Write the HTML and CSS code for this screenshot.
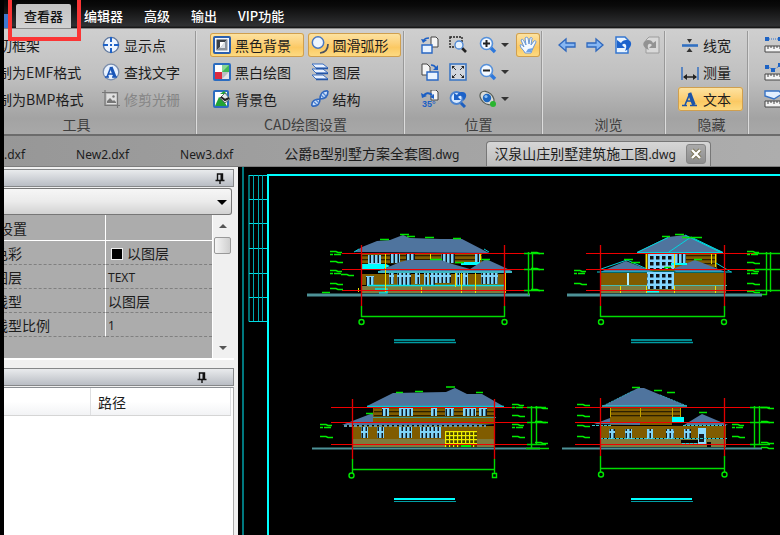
FILE: index.html
```html
<!DOCTYPE html>
<html lang="zh-CN">
<head>
<meta charset="utf-8">
<title>CAD 查看器</title>
<link rel="stylesheet" href="styles.css">
</head>
<body>
<div class="app">
  <header class="menubar">
    <span class="app-button"></span>
    <nav class="menu">
      <a href="#" class="menu-item active">查看器</a>
      <a href="#" class="menu-item">编辑器</a>
      <a href="#" class="menu-item">高级</a>
      <a href="#" class="menu-item">输出</a>
      <a href="#" class="menu-item">VIP功能</a>
    </nav>
    <span class="highlight"></span>
  </header>

  <div class="ribbon">
    <section class="group group-tools">
      <div class="columns">
        <div class="column cut">
          <button class="tool">切框架</button>
          <button class="tool">制为EMF格式</button>
          <button class="tool">制为BMP格式</button>
        </div>
        <div class="column">
          <button class="tool"><svg class="icon" viewBox="0 0 18 18"><circle cx="9" cy="9" r="7.6" fill="#eef5ff" stroke="#5f789f" stroke-width="1.4"/><path d="M9 1v5M9 12v5M1 9h5M12 9h5" stroke="#1d62c8" stroke-width="2"/><path d="M8 9h2" stroke="#1d62c8" stroke-width="2"/></svg>显示点</button>
          <button class="tool"><svg class="icon" viewBox="0 0 18 18"><circle cx="9" cy="9" r="7.8" fill="#e8f2ff" stroke="#7b8dab" stroke-width="1.3"/><path d="M5 14L9 4" fill="none" stroke="#1a56b8" stroke-width="1.600"/><path d="M9 4l4 10" stroke="#1a56b8" stroke-width="3.200"/><path d="M6 11h6M3 14h4M10 14h5" stroke="#1a56b8" stroke-width="1.400"/></svg>查找文字</button>
          <button class="tool" disabled><svg class="icon" viewBox="0 0 18 18"><path d="M3 0v15.500H18M0 2.500h15.500V18" fill="none" stroke="#777" stroke-width="1.200"/><path d="M4.500 4h10v10h-10z" fill="#e0e0e0"/><path d="M5 13v-2l3-3 3 3 1-1 2 2v1z" fill="#777"/><circle cx="11.500" cy="6.500" r="1.200" fill="#777"/></svg>修剪光栅</button>
        </div>
      </div>
      <h2 class="group-title">工具</h2>
    </section>

    <section class="group group-settings">
      <div class="columns">
        <div class="column wide">
          <button class="tool on"><svg class="icon" viewBox="0 0 18 18"><rect x="1" y="1" width="16" height="16" rx="1" fill="#f4f8ff" stroke="#2b5fae" stroke-width="2"/><path d="M3.500 3.500h11l-11 11z" fill="#3a4048"/><path d="M14.500 3.500v11h-11z" fill="#8b929b"/><path d="M7 6h5l-5 6z" fill="#fff"/><path d="M12 6v6H7z" fill="#dde1e6"/></svg>黑色背景</button>
          <button class="tool"><svg class="icon" viewBox="0 0 18 18"><rect x="1" y="1" width="16" height="16" rx="1" fill="#fff" stroke="#2b6cc0" stroke-width="2"/><path d="M9 2h7v7H9z" fill="#3fb955"/><path d="M9 2h7l-7 7z" fill="#8ad696"/><path d="M2 9h7v7H2z" fill="#dc2b40"/><path d="M9 9h7v7H9z" fill="#b9bec4"/><path d="M16 9v7H9z" fill="#e4e6e9"/></svg>黑白绘图</button>
          <button class="tool"><svg class="icon" viewBox="0 0 18 18"><rect x="1" y="1" width="14" height="16" rx="1" fill="#fff" stroke="#2b6cc0" stroke-width="2"/><path d="M2 16L6 7l4 3 4 6z" fill="#22a434"/><path d="M7 4l4-3 3 3z" fill="#22a434"/><path d="M7 8l5-5 5 6-5 4z" fill="#e4e9ec" stroke="#5a6a6a"/><path d="M8 7l4 3 4-2" fill="none" stroke="#222" stroke-width="2"/></svg>背景色</button>
        </div>
        <div class="column wide">
          <button class="tool on"><svg class="icon" viewBox="0 0 18 18"><circle cx="7" cy="6.500" r="5.700" fill="#edf5ff" stroke="#4a78c0" stroke-width="1.500"/><path d="M17 8c0 5-3 8.500-8 9" fill="none" stroke="#4a5260" stroke-width="1.700"/></svg>圆滑弧形</button>
          <button class="tool"><svg class="icon" viewBox="0 0 18 18"><path d="M1 1h11l5 4H5z" fill="#eaf2ff" stroke="#3b6fc2"/><path d="M1 6h11l5 4H5z" fill="#eaf2ff" stroke="#3b6fc2"/><path d="M1 12h11l5 4H5z" fill="#eaf2ff" stroke="#3b6fc2"/><path d="M5 5.500h12M5 10.500h12M5 16.500h12" stroke="#2456a6" stroke-width="1.500"/></svg>图层</button>
          <button class="tool"><svg class="icon" viewBox="0 0 18 18"><path d="M1 16c-1-5 3-7 8-7s8-3 8-8M1 16c6 1 8-3 8-7s2-9 8-8" fill="#cfe1fa" stroke="#2f66bd" stroke-width="1.600"/><path d="M3 12l3 3M5 10l3 3M10 5l3 3M12 3l3 3" stroke="#4d84d2" stroke-width="1.300"/></svg>结构</button>
        </div>
      </div>
      <h2 class="group-title">CAD绘图设置</h2>
    </section>

    <section class="group group-position">
      <div class="columns">
        <div class="column">
          <button class="tool" aria-label="向左旋转"><svg class="icon" viewBox="0 0 18 18"><path d="M10 1h5l2 2v8h-7z" fill="#f5f5f5" stroke="#444"/><path d="M1 9h10v8H1z" fill="#e9f3ff" stroke="#2867c4" stroke-width="1.400"/><path d="M8 2C5 2 3 3 3 5" fill="none" stroke="#1c5fc4" stroke-width="1.600"/><path d="M0 3l2 4 4-3z" fill="#1c5fc4"/></svg></button>
          <button class="tool" aria-label="向右旋转"><svg class="icon" viewBox="0 0 18 18"><path d="M1 1h5l3 3v8H1z" fill="#f5f5f5" stroke="#444"/><path d="M6 9h11v8H6z" fill="#e9f3ff" stroke="#2867c4" stroke-width="1.400"/><path d="M10 2c3 0 4 1 5 3" fill="none" stroke="#1c5fc4" stroke-width="1.600"/><path d="M17 2v5h-5z" fill="#1c5fc4"/></svg></button>
          <button class="tool" aria-label="旋转35°"><svg class="icon" viewBox="0 0 18 18"><path d="M10 0h5l2 2v8h-7z" fill="#f5f5f5" stroke="#444"/><path d="M3 6c1-3 5-4 8-1" fill="none" stroke="#1c5fc4" stroke-width="2"/><path d="M0 3l1 5 5-2zM9 7l4-3v5z" fill="#1c5fc4"/><text x="1" y="17" class="icon-text">35°</text></svg></button>
        </div>
        <div class="column">
          <button class="tool" aria-label="框选缩放"><svg class="icon" viewBox="0 0 18 18"><path d="M1 1h12v10H1z" fill="none" stroke="#222" stroke-width="1.400" stroke-dasharray="2 1"/><path d="M13 12l4 4" stroke="#222" stroke-width="2.600"/><circle cx="10" cy="9" r="4" fill="#e5f2ff" stroke="#4b86d4" stroke-width="1.300"/></svg></button>
          <button class="tool" aria-label="适合窗口"><svg class="icon" viewBox="0 0 18 18"><rect x="1" y="1" width="16" height="16" fill="#d2d7de" stroke="#3f78c4" stroke-width="1.600"/><path d="M3 6V3h3zM12 3h3v3zM3 12v3h3zM15 12v3h-3z" fill="#222"/><path d="M4 4l3 3M14 4l-3 3M4 14l3-3M14 14l-3-3" stroke="#333"/></svg></button>
          <button class="tool" aria-label="还原缩放"><svg class="icon" viewBox="0 0 18 18"><path d="M11 12l5 5" stroke="#1d5fc0" stroke-width="3"/><circle cx="7.500" cy="8" r="6" fill="#d9eaff" stroke="#4a82cf" stroke-width="1.800"/><path d="M5 3v7h7L9 7c3-3 6 0 5 4 5-4 4-10-2-9-2 0-3 1-4 3z" fill="#1d62c8"/></svg></button>
        </div>
        <div class="column zoom-column">
          <button class="tool" aria-label="放大"><svg class="icon" viewBox="0 0 18 18"><path d="M11 11l5 5" stroke="#2d78dc" stroke-width="3.400"/><circle cx="7.500" cy="7.500" r="6" fill="#f4f9ff" stroke="#5590da" stroke-width="1.600"/><path d="M4 7.500h7M7.500 4v7" stroke="#222" stroke-width="2"/></svg><span class="caret"></span></button>
          <button class="tool" aria-label="缩小"><svg class="icon" viewBox="0 0 18 18"><path d="M11 11l5 5" stroke="#2d78dc" stroke-width="3.400"/><circle cx="7.500" cy="7.500" r="6" fill="#f4f9ff" stroke="#5590da" stroke-width="1.600"/><path d="M4 7.500h7" stroke="#222" stroke-width="2"/></svg><span class="caret"></span></button>
          <button class="tool" aria-label="视图"><svg class="icon" viewBox="0 0 18 18"><ellipse cx="8" cy="8" rx="8" ry="5.500" transform="rotate(42 8 8)" fill="#d9dbd8" stroke="#555c55" stroke-width="1.200"/><circle cx="8" cy="8" r="4.200" fill="#1d67c0"/><circle cx="7" cy="6.500" r="1.600" fill="#8dc1f5"/><circle cx="14" cy="14" r="3" fill="#29b52f"/></svg><span class="caret"></span></button>
        </div>
        <div class="column">
          <button class="tool on" aria-label="平移"><svg class="icon" viewBox="0 0 18 18"><path d="M6 17C5 14 1 12 1 9c1-1 2 0 4 2L2 4c1-1 2-1 3 1l2 4-1-7c1-1 2-1 3 0l1 6 1-6c1-1 3 0 2 1l-1 6 3-4c1-1 2 0 2 1l-3 6c-1 2-1 3-2 5z" fill="#f4f9ff" stroke="#6a98d8"/><path d="M7 16h5c1-2 1-3 2-4l-5 1z" fill="#6da2e6"/></svg></button>
        </div>
      </div>
      <h2 class="group-title">位置</h2>
    </section>

    <section class="group group-browse">
      <div class="columns">
        <button class="tool" aria-label="后退"><svg class="icon" viewBox="0 0 18 18"><path d="M1 9l7-6v4h9v4H8v4z" fill="#86b6f2" stroke="#2f68bd" stroke-width="1.300"/></svg></button>
        <button class="tool" aria-label="前进"><svg class="icon" viewBox="0 0 18 18"><path d="M17 9l-7-6v4H1v4h9v4z" fill="#86b6f2" stroke="#2f68bd" stroke-width="1.300"/></svg></button>
        <button class="tool" aria-label="撤销"><svg class="icon" viewBox="0 0 18 18"><path d="M2 1h9l3 3v13H2z" fill="#e9f4ff" stroke="#3476cf" stroke-width="1.500"/><path d="M3 4v8h8l-3-3c3-3 6 0 3 6 8-3 8-12 1-11-2 0-4 1-5 3z" fill="#1c63cd"/></svg></button>
        <button class="tool" aria-label="重做" disabled><svg class="icon" viewBox="0 0 18 18"><path d="M4 4l3-3h10v16H4z" fill="#d8d8d8" stroke="#9c9c9c"/><path d="M14 5v7H7l3-3C7 6 4 9 7 14-1 11 0 5 6 4c3 0 4 1 5 3z" fill="#929292"/></svg></button>
      </div>
      <h2 class="group-title">浏览</h2>
    </section>

    <section class="group group-hide">
      <div class="columns">
        <div class="column">
          <button class="tool"><svg class="icon" viewBox="0 0 18 18"><path d="M1 9.500h16" stroke="#3170c2" stroke-width="2.600"/><path d="M6 3h5L8.500 7zM8.500 12l3 4h-6z" fill="#333"/></svg>线宽</button>
          <button class="tool"><svg class="icon" viewBox="0 0 18 18"><path d="M1 4v13M17 4v13" stroke="#2d6bc0" stroke-width="1.400"/><path d="M3 14h12" stroke="#222" stroke-width="1.500"/><path d="M2 14l4-3v6zM16 14l-4-3v6z" fill="#222"/></svg>测量</button>
          <button class="tool on"><svg class="icon" viewBox="0 0 18 18"><path d="M4 15L9 3M6 11h6" fill="none" stroke="#1d54a8" stroke-width="1.600"/><path d="M8.500 3L13 15" stroke="#1d54a8" stroke-width="3.600"/><path d="M1 15.500h5M9 15.500h7" stroke="#1d54a8" stroke-width="1.600"/></svg>文本</button>
        </div>
      </div>
      <h2 class="group-title">隐藏</h2>
    </section>

    <section class="group group-measure">
      <div class="columns">
        <div class="column">
          <button class="tool" aria-label="测量距离"><svg class="icon" viewBox="0 0 18 18"><path d="M3 3h15" stroke="#2c71cc" stroke-dasharray="1 1"/><path d="M1 1h4v4H1zM14 1h4v4h-4z" fill="#1d63c4"/><path d="M1 10h18v6H1z" fill="#f3f3f3" stroke="#444"/><path d="M4 10v3M7 10v2M10 10v3M13 10v2M16 10v3" stroke="#444"/></svg></button>
          <button class="tool" aria-label="测量折线"><svg class="icon" viewBox="0 0 18 18"><path d="M3 3l6 4 8-5" fill="none" stroke="#2c71cc" stroke-dasharray="1 1"/><path d="M1 2h4v4H1zM7 5h4v4H7zM14 0h4v4h-4z" fill="#1d63c4"/><path d="M1 11h18v6H1z" fill="#f3f3f3" stroke="#444"/><path d="M4 11v3M7 11v2M10 11v3M13 11v2M16 11v3" stroke="#444"/></svg></button>
          <button class="tool" aria-label="测量面积"><svg class="icon" viewBox="0 0 18 18"><path d="M1 1h14l3 3-8 5-9-3z" fill="#e2efff" stroke="#3672c4" stroke-width="1.400"/><path d="M1 11h18v6H1z" fill="#f3f3f3" stroke="#444"/><path d="M4 11v3M7 11v2M10 11v3M13 11v2M16 11v3" stroke="#444"/></svg></button>
        </div>
      </div>
    </section>
  </div>

  <nav class="doc-tabs">
    <a href="#" class="doc-tab"><span class="latin">.dxf</span></a>
    <a href="#" class="doc-tab"><span class="latin">New2.dxf</span></a>
    <a href="#" class="doc-tab"><span class="latin">New3.dxf</span></a>
    <a href="#" class="doc-tab">公爵<span class="latin">B</span>型别墅方案全套图<span class="latin">.dwg</span></a>
    <div class="doc-tab current"><a href="#">汉泉山庄别墅建筑施工图<span class="latin">.dwg</span></a><button class="close" aria-label="关闭"><svg viewBox="0 0 12 12"><path d="M2 2l8 8M10 2l-8 8" stroke="#77704f" stroke-width="4"/><path d="M2 2l8 8M10 2l-8 8" stroke="#fff" stroke-width="2.400"/></svg></button></div>
  </nav>

  <main class="workspace">
    <aside class="side">
      <div class="panel-head"><svg class="pin" viewBox="0 0 10 11"><path d="M2.500 7V1h5v6M0.500 7.500h9M5 7v4" fill="none" stroke="#111" stroke-width="1.400"/><path d="M6.500 1v6" stroke="#111" stroke-width="2"/></svg></div>
      <div class="picker"><select aria-label="对象"><option></option></select><span class="caret"></span></div>
      <div class="props">
        <table class="prop-table">
          <tr><th><span>设置</span></th><td></td></tr>
          <tr><th><span class="deep">色彩</span></th><td><span class="swatch"></span>以图层</td></tr>
          <tr><th><span class="deep">图层</span></th><td><span class="latin">TEXT</span></td></tr>
          <tr><th><span class="deep">线型</span></th><td>以图层</td></tr>
          <tr><th><span class="deep">线型比例</span></th><td><span class="latin">1</span></td></tr>
        </table>
        <div class="scrollbar"><span class="arrow up"></span><span class="thumb"></span><span class="arrow down"></span></div>
      </div>
      <div class="panel-head second"><svg class="pin" viewBox="0 0 10 11"><path d="M2.500 7V1h5v6M0.500 7.500h9M5 7v4" fill="none" stroke="#111" stroke-width="1.400"/><path d="M6.500 1v6" stroke="#111" stroke-width="2"/></svg></div>
      <div class="list">
        <div class="list-head"><span class="first"></span><span class="path">路径</span></div>
      </div>
    </aside>

    <div class="canvas">
      <svg class="drawing" viewBox="238 167 542 368" preserveAspectRatio="xMinYMin slice">
        <defs>
          <pattern id="siding" x="0" y="253" width="8" height="4" patternUnits="userSpaceOnUse"><path d="M0 0h8v4H0z" fill="#805c00"/><path d="M0 2h8v1.300H0z" fill="#2c2000"/></pattern>
          <pattern id="glass" x="0" y="0" width="4" height="12" patternUnits="userSpaceOnUse"><path d="M0 0h4v12H0z" fill="#7fd4f8"/><path d="M1.500 1h1.500v10H1.500z" fill="#101820"/></pattern>
          <pattern id="panes" x="648" y="254" width="6" height="6" patternUnits="userSpaceOnUse"><path d="M0 0h6v6H0z" fill="#83d6ff"/><path d="M2 2h3.500v3.500H2z" fill="#0b1115"/></pattern>
          <pattern id="lattice" x="445" y="431" width="4" height="4" patternUnits="userSpaceOnUse"><path d="M0 0h4v4H0z" fill="#4a4500"/><path d="M0 .5h4M.5 0v4" stroke="#f0f000" stroke-width="1.400"/></pattern>
          <g id="mark" fill="none" stroke="#00f000" stroke-width="1.500"><path d="M0 -.5h6l2 1h4M4 2.500h7M0 2.500h3"/></g>
          <g id="thin-mark" fill="none" stroke="#00f000" stroke-width="1.400"><path d="M0 -.5h6l2 1h5"/></g>
          <g id="title" fill="none"><path d="M0 0h61" stroke="#00b9c0" stroke-width="1.600"/><path d="M0 2.500h62" stroke="#009ba2" stroke-width="1.400"/></g>
          <g id="title-bold" fill="none"><path d="M0 0h61" stroke="#0ff" stroke-width="2"/><path d="M0 2.500h62" stroke="#009fa6" stroke-width="1.200"/></g>
        </defs>

        <g fill="none">
          <path d="M243 167V535" stroke="#00a0a8" stroke-width="1.500"/>
          <path d="M249 175V321.500H267M249 175.500h18M249 199.500h18M249 223.500h18M249 248.500h18M249 273.500h18M249 297.500h18" stroke="#00dce4"/>
          <path d="M253.500 175v146M258.500 175v146M262.500 175v146" stroke="#00a8b0"/>
          <path d="M268 535V175H780" stroke="#0ff" stroke-width="2"/>
        </g>

        <!-- Front elevation -->
        <g>
          <path d="M354 252l8-5 15-6 13-1 13-5 7 3 30 1 22 0 27 14z" fill="#4f749e"/>
          <path d="M354 252l5-3M484 249l5 3" stroke="#00d0da"/>
          <path d="M361 254h121v10H361z" fill="url(#siding)"/>
          <path d="M368 255h13v9h-13zM390 253h10v10h-10zM406 253h9v9h-9zM441 253h14v10h-14zM475 253h5v10h-5z" fill="url(#glass)"/>
          <path d="M361 264h25l4 2-6 3h-23zM461 262h19v3h-19z" fill="#0ff"/>
          <path d="M379 271l21-9 8-2h33l8 3 21 6 16-10 26 12z" fill="#4f749e"/>
          <path d="M378 272h134" stroke="#38b7c2" stroke-width="2"/>
          <path d="M361 274h144v11H361z" fill="#805c00"/>
          <path d="M366 276h8v15h-8zM389 273h5v11h-5zM397 273h14v12h-14zM415 273h5v11h-5zM424 273h5v12h-5zM430 273h5v12h-5zM434 273h17v10h-17zM455 273h5v13h-5zM463 273h5v12h-5zM481 273h17v11h-17z" fill="url(#glass)"/>
          <path d="M361 286h144v7H361z" fill="#7e7a3c"/>
          <path d="M368 285.500h137M375 289h12v4h-8" stroke="#00e6ee" stroke-width="1.500" fill="none"/>
          <path d="M385.500 254v38M421.500 287v6M455.500 273v14M461.500 273v20M475.500 273v20M430.500 254v6M505.500 273v20M480.500 254v6M358.500 288v4" stroke="#eee000"/>
          <path d="M307 295h223" stroke="#4d9297" stroke-width="3"/>
          <path d="M322 292.500h8M380 239.500h9M400 234.500h9M407 236.500h8M425 237.500h9M453 238.500h8M430 259.500h12M455 262.500h9M481 259.500h9" stroke="#00e800" stroke-width="1.500"/>
        </g>
        <g fill="none">
          <path d="M342 253.500h182M342 269.500h182M342 290.500h182" stroke="#f00000" stroke-width="1.200"/>
          <path d="M361.500 245v61M504.500 245v61" stroke="#e00000" stroke-width="1.300"/>
          <path d="M361.500 306v11M504.500 306v11M361 316.500h144M524 253.500h16M524 269.500h16M524 290.500h16M528.500 252v43M532.500 252v39" stroke="#00dc00" stroke-width="1.400"/>
          <circle cx="361.500" cy="322" r="2.500" stroke="#00e800" stroke-width="1.400"/><circle cx="504.500" cy="322" r="2.500" stroke="#00e800" stroke-width="1.400"/>
          <use href="#mark" x="330" y="252"/><use href="#thin-mark" x="330" y="262"/><use href="#mark" x="330" y="271"/><use href="#thin-mark" x="341" y="275"/><use href="#thin-mark" x="330" y="284"/><use href="#thin-mark" x="330" y="289"/>
          <use href="#thin-mark" x="531" y="253"/><use href="#thin-mark" x="531" y="269"/><use href="#thin-mark" x="531" y="290"/>
          <use href="#title" x="394" y="340"/>
        </g>

        <!-- Side elevation -->
        <g>
          <path d="M637 252l31-15 17-2 38 17z" fill="#4f749e"/>
          <path d="M637 252.500l31-15M669 252l22-15M691 237l32 15.500H637M685 235l35 17" fill="none" stroke="#00d7df"/>
          <path d="M645 254h72v17h-72z" fill="#805c00"/>
          <path d="M686 254h30v15h-30z" fill="url(#siding)"/>
          <path d="M600 272l26-11 28 11zM673 269l22-9 31 12h-50z" fill="#4f749e"/>
          <path d="M601 269l26-9 20 9M597 272h135M716 263l15 9" fill="none" stroke="#00cfd8"/>
          <path d="M601 273h125v12H601z" fill="#805c00"/>
          <path d="M601 286h125v7H601z" fill="#7e7a3c"/>
          <path d="M601 285.500h126" stroke="#48bcb0"/>
          <path d="M648 254h26v15h-26zM647 272h27v17h-27z" fill="url(#panes)"/>
          <path d="M675 254h11v10h-11z" fill="url(#glass)"/>
          <path d="M671 264h16M646 291.500h13" stroke="#0ff" stroke-width="2"/>
          <path d="M627 273h2v12h-2z" fill="#b2efff"/>
          <path d="M646.500 254v16M646.500 286v7M620.500 286v7M674.500 286v7M715.500 254v13M711.500 254v10M674.500 254v14M715.500 286v7" stroke="#eee000"/>
          <path d="M567 295h195" stroke="#4d9297" stroke-width="3"/>
          <path d="M662 236.500h8M675 234.500h9M682 237.500h20M624 259.500h9M631 262.500h9M694 259.500h8M664 267.500h7" stroke="#00e800" stroke-width="1.500"/>
        </g>
        <g fill="none">
          <path d="M586 253.500h170M586 269.500h170M586 290.500h170" stroke="#f00000" stroke-width="1.200"/>
          <path d="M600.500 245v61M724.500 245v61" stroke="#e00000" stroke-width="1.300"/>
          <path d="M600.500 306v11M724.500 306v11M600 316.500h125M755 253.500h25M755 269.500h25M755 290.500h25M766.500 252v43M770.500 252v40M762 294.500h5" stroke="#00dc00" stroke-width="1.400"/>
          <circle cx="601" cy="322" r="2.500" stroke="#00e800" stroke-width="1.400"/><circle cx="724" cy="322" r="2.500" stroke="#00e800" stroke-width="1.400"/>
          <use href="#mark" x="574" y="271"/><use href="#thin-mark" x="574" y="284"/>
          <use href="#mark" x="747" y="252"/><use href="#thin-mark" x="747" y="263"/><use href="#mark" x="747" y="271"/><use href="#thin-mark" x="747" y="284"/><use href="#thin-mark" x="747" y="292"/>
          <use href="#title" x="631" y="340"/>
        </g>

        <!-- Rear elevation -->
        <g>
          <path d="M367 406l26-13 53-1 9-4 12 6h15l21 12z" fill="#4f749e"/>
          <path d="M367 406.500h137" stroke="#00cbd5" stroke-width="1.500"/>
          <path d="M373 408h122v16H373z" fill="#805c00"/>
          <path d="M374 408h120v9H374z" fill="url(#siding)"/>
          <path d="M342 425l31-12v9h80l42 3z" fill="#4f749e"/>
          <path d="M352 426h143v13H352z" fill="#805c00"/>
          <path d="M352 439h143v8H352z" fill="#7e7a3c"/>
          <path d="M382 407h7v9h-7zM399 407h14v9h-14zM431 407h6v9h-6zM445 407h9v9h-9zM463 407h13v9h-13zM479 407h8v9h-8zM361 427h7v11h-7zM377 427h7v11h-7zM399 427h13v11h-13zM420 427h21v11h-21z" fill="url(#glass)"/>
          <path d="M373 417.500h123" stroke="#479c88"/>
          <path d="M344 426h142" stroke="#6098a8" stroke-width="2" stroke-dasharray="3 2"/>
          <path d="M445 431h32v16h-32z" fill="url(#lattice)"/>
          <path d="M461 446h10" stroke="#00e800" stroke-width="2"/>
          <path d="M312 448.500h228" stroke="#4d9297" stroke-width="2"/>
          <path d="M396 392.500h7M415 391.500h8M446 387h9M476 392.500h7M366 413.500h7" stroke="#00e800" stroke-width="1.500"/>
        </g>
        <g fill="none">
          <path d="M331 407.500h196M331 422.500h196M331 444.500h196" stroke="#f00000" stroke-width="1.200"/>
          <path d="M352.500 399v60M494.500 399v60" stroke="#e00000" stroke-width="1.300"/>
          <path d="M352.500 459v14M494.500 459v14M352 469.500h143M527 407.500h19M527 422.500h19M527 444.500h19M531.500 406v43M536.500 406v39M526 448.500h23" stroke="#00dc00" stroke-width="1.400"/>
          <circle cx="351.500" cy="475.500" r="2.500" stroke="#00e800" stroke-width="1.400"/><path d="M492.500 473.500h4v4h-4z" stroke="#00e800" stroke-width="1.400"/>
          <use href="#mark" x="320" y="425"/><use href="#thin-mark" x="320" y="437"/>
          <use href="#mark" x="512" y="405"/><use href="#thin-mark" x="512" y="416"/><use href="#mark" x="512" y="425"/><use href="#thin-mark" x="512" y="437"/>
          <use href="#thin-mark" x="535" y="408"/><use href="#thin-mark" x="535" y="422"/><use href="#thin-mark" x="535" y="443"/>
          <use href="#title-bold" x="394" y="499"/>
        </g>

        <!-- Courtyard elevation -->
        <g>
          <path d="M603 406l35-18h6l43 18z" fill="#4f749e"/>
          <path d="M602 406h85" stroke="#38bdcb" stroke-width="1.500"/>
          <path d="M603 406l30-15M660 395l27 11" stroke="#2fa5b8" stroke-dasharray="2 1"/>
          <path d="M610 408h71v9h-71z" fill="url(#siding)"/>
          <path d="M610 417h62v8h-62zM601 426h125v12H601z" fill="#805c00"/>
          <path d="M594 424l16-6v5h30v2zM684 425l18-11 26 11z" fill="#4f749e"/>
          <path d="M601 439h125v8H601z" fill="#7e7a3c"/>
          <path d="M672 417h12v5h-12z" fill="#0ff"/>
          <path d="M673 423h10v3h-10zM681 440h17v3h-17zM707 442h4v6h-4z" fill="#050505"/>
          <path d="M609 429h6v10h-6zM625 429h7v10h-7zM647 429h6v10h-6zM666 429h8v10h-8zM684 429h7v10h-7z" fill="url(#glass)"/>
          <path d="M698 428h8v16h-8z" fill="#8adcff"/><path d="M699 434h5v8h-5z" fill="#161b22"/>
          <path d="M592 425.500h20M683 425.500h44M600 438.500h127M682 443.500h16" stroke="#31c8cf" stroke-dasharray="3 1"/>
          <path d="M610.500 408v9M640.500 408v9M672.500 408v9M680.500 408v9" stroke="#bfa300"/>
          <path d="M562 448.500h200" stroke="#4d9297" stroke-width="2"/>
          <path d="M632 387.500h8M654 390.500h8M667 392.500h8M699 412.500h8" stroke="#00e800" stroke-width="1.500"/>
        </g>
        <g fill="none">
          <path d="M575 407.500h176M575 422.500h176M575 444.500h176" stroke="#f00000" stroke-width="1.200"/>
          <path d="M600.500 398v58M724.500 398v58" stroke="#e00000" stroke-width="1.300"/>
          <path d="M600.500 456v16M724.500 456v16M600 468.500h125M750 407.500h20M750 422.500h20M750 444.500h20M754.500 406v42M759.500 406v39" stroke="#00dc00" stroke-width="1.400"/>
          <circle cx="601" cy="474.500" r="2.500" stroke="#00e800" stroke-width="1.400"/><circle cx="724.500" cy="474.500" r="2.500" stroke="#00e800" stroke-width="1.400"/>
          <use href="#thin-mark" x="577" y="405"/><use href="#thin-mark" x="577" y="416"/><use href="#thin-mark" x="577" y="426"/><use href="#thin-mark" x="577" y="437"/>
          <use href="#mark" x="732" y="425"/><use href="#thin-mark" x="732" y="437"/>
          <use href="#thin-mark" x="761" y="408"/><use href="#thin-mark" x="761" y="422"/><use href="#thin-mark" x="761" y="443"/><use href="#thin-mark" x="761" y="448"/>
          <use href="#title-bold" x="631" y="499"/>
        </g>
      </svg>
    </div>
  </main>
</div>
</body>
</html>
```
FILE: styles.css
```css
* { box-sizing: border-box; }

body {
  margin: 0;
  background: #000;
  color: #1c1c1c;
  font: 14px/20px "Noto Sans CJK SC", sans-serif;
}

a { color: inherit; text-decoration: none; }

button {
  padding: 0;
  border: 0;
  background: none;
  color: inherit;
  font: inherit;
}

.app {
  display: flex;
  flex-direction: column;
  min-height: 100vh;
  padding-left: 4px;
  overflow: hidden;
}

.latin { font-family: "Noto Sans", sans-serif; font-size: 12px; }

/* Menu bar */
.menubar {
  position: relative;
  display: flex;
  align-items: flex-end;
  height: 28px;
  background: linear-gradient(#050505 0, #0a0a0a 20%, #303133 92%, #111 100%);
}

.app-button { width: 4px; height: 14px; background: #3f78cf; }

.menu { display: flex; gap: 21px; margin-left: 8px; }

.menu-item {
  height: 24px;
  color: #fff;
  font-size: 13px;
  font-weight: 500;
  line-height: 24px;
}

.menu-item.active {
  margin-right: -8px;
  padding: 0 8px;
  border-radius: 2px 2px 0 0;
  background: linear-gradient(#c2c2c2, #d2d2d2);
  color: #111;
}

.highlight {
  position: absolute;
  top: -4px;
  left: 4px;
  z-index: 1;
  width: 73px;
  height: 45px;
  border: 4px solid #fb3535;
}

/* Ribbon */
.ribbon {
  display: flex;
  height: 108px;
  border-top: 1px solid #8a8a8a;
  border-bottom: 2px solid #6c6c6c;
  background: linear-gradient(#cfcfcf, #c0c0c0 45%, #a3a3a3 85%, #a8a8a8);
}

.group {
  display: flex;
  flex: none;
  flex-direction: column;
  justify-content: space-between;
  margin: 2px 0 0;
  padding: 2px 3px 0 12px;
  border-right: 1px solid #dcdcdc;
  box-shadow: inset -1px 0 #999;
}

.group-tools { width: 193px; padding-left: 0; overflow: hidden; }
.group-settings { width: 208px; padding-left: 13px; }
.group-position { width: 138px; padding-left: 13px; }
.group-browse { width: 123px; }
.group-hide { width: 83px; }
.group-measure { border: 0; box-shadow: none; }

.columns { display: flex; gap: 4px; }
.column { display: flex; flex-direction: column; gap: 3px; }
.column.wide { flex: 1; }
.column.cut { width: 91px; margin-left: -6px; margin-right: 6px; }

.group-title {
  margin: 0;
  color: #3f3f3f;
  font-size: 14px;
  font-weight: 400;
  line-height: 20px;
  text-align: center;
}

.group-tools .group-title { padding-right: 44px; }

.tool {
  display: flex;
  align-items: center;
  gap: 4px;
  height: 24px;
  padding: 0 3px;
  border-radius: 3px;
  white-space: nowrap;
}

.cut .tool { padding: 0; }

.tool:disabled { color: #858585; }

.tool.on {
  background: linear-gradient(#fde4a4, #fcd078 45%, #fbc963 60%, #fddc85);
  box-shadow: inset 0 0 0 1px #cf9f4f;
}

.group-hide .tool { padding-right: 12px; }

.icon { flex: none; width: 18px; height: 18px; }

.icon-text { fill: #1c5fc4; font: bold 9px "Liberation Sans", sans-serif; }

.zoom-column { margin-left: 2px; }

.caret {
  border: 4px solid transparent;
  border-top-color: #333;
  border-bottom: 0;
}

/* Document tabs */
.doc-tabs {
  display: flex;
  align-items: flex-end;
  gap: 51px;
  height: 31px;
  border-bottom: 1px solid #7c7c7c;
  background: linear-gradient(90deg, #979797, #adadad);
  white-space: nowrap;
}

.doc-tab { flex: none; line-height: 22px; }

.doc-tab.current {
  display: flex;
  align-items: center;
  gap: 10px;
  height: 25px;
  margin-left: -24px;
  padding: 0 4px 0 7px;
  border: 1px solid #777;
  border-bottom: 0;
  border-radius: 4px 4px 0 0;
  background: linear-gradient(#d6d6d6, #bdbdbd);
}

.close {
  display: grid;
  place-items: center;
  width: 20px;
  height: 20px;
  border: 1px solid #858585;
  border-radius: 3px;
  background: linear-gradient(#aaa, #8d8d8d);
}

.close svg { width: 12px; height: 12px; }

/* Workspace */
.workspace { display: flex; flex: 1; }

.side {
  display: flex;
  flex: none;
  flex-direction: column;
  width: 234px;
  padding: 2px 4px 0 0;
  background: #f0f0f0;
}

.panel-head {
  display: flex;
  align-items: center;
  justify-content: flex-end;
  height: 18px;
  padding-right: 8px;
  border: 1px solid #858789;
  border-left: 0;
  background: linear-gradient(#e9ebed, #b9bdc4);
}

.panel-head.second { margin-top: 8px; padding-right: 26px; }

.pin { width: 10px; height: 11px; }

.picker { position: relative; margin: 1px 2px 0 0; }

.picker select {
  display: block;
  width: 100%;
  height: 27px;
  border: 1px solid #777;
  border-left: 0;
  border-radius: 0 3px 3px 0;
  appearance: none;
  background: linear-gradient(#f6f6f6, #ebebeb 50%, #d2d2d2);
}

.picker .caret { position: absolute; top: 12px; right: 5px; border-width: 5px 5px 0; border-top-color: #000; }

.props {
  display: flex;
  height: 145px;
  border-bottom: 2px solid #fff;
  background: #acacac;
}

.prop-table {
  flex: 1;
  align-self: flex-start;
  border-collapse: separate;
  border-spacing: 0;
  table-layout: fixed;
}

.prop-table th,
.prop-table td {
  height: 24px;
  padding: 0 2px;
  overflow: hidden;
  border-bottom: 1px dashed #808080;
  font-weight: 400;
  line-height: 20px;
  text-align: left;
  white-space: nowrap;
}

.prop-table th { width: 102px; padding: 0; border-right: 1px solid #fff; }
.prop-table th span { margin-left: -5px; }
.prop-table th .deep { margin-left: -10px; }
.prop-table tr:first-child > * { height: 26px; border-bottom: 1px solid #fff; }

.swatch {
  display: inline-block;
  width: 12px;
  height: 12px;
  margin: 0 4px 0 3px;
  border: 1px solid #eee;
  background: #000;
  vertical-align: -1px;
}

.scrollbar {
  display: flex;
  flex-direction: column;
  align-items: center;
  width: 22px;
  padding: 9px 3px 8px 1px;
  border-left: 1px solid #fff;
  background: #f0f0f0;
}

.arrow { border: 4px solid transparent; }
.arrow.up { border-top: 0; border-bottom-color: #555; }
.arrow.down { margin-top: auto; border-bottom: 0; border-top-color: #555; }

.thumb {
  width: 17px;
  height: 17px;
  margin-top: 9px;
  border: 1px solid #999;
  border-radius: 2px;
  background: linear-gradient(90deg, #f5f5f5, #cfcfcf);
}

.list {
  flex: 1;
  margin-top: 1px;
  border-top: 1px solid #8b8f94;
  border-right: 1px solid #aaa;
  background: #fff;
}

.list-head {
  display: flex;
  height: 28px;
  margin-right: 2px;
  border-bottom: 1px solid #d5d5d5;
  background: linear-gradient(#fff 50%, #f2f3f5);
  line-height: 28px;
}

.first { width: 87px; border-right: 1px solid #dedfe1; }
.path { flex: 1; padding-left: 7px; border-right: 1px solid #dedfe1; }

/* Drawing area */
.canvas { position: relative; flex: 1; min-width: 0; background: #000; }

.drawing { position: absolute; inset: 0; width: 100%; height: 100%; }
```
